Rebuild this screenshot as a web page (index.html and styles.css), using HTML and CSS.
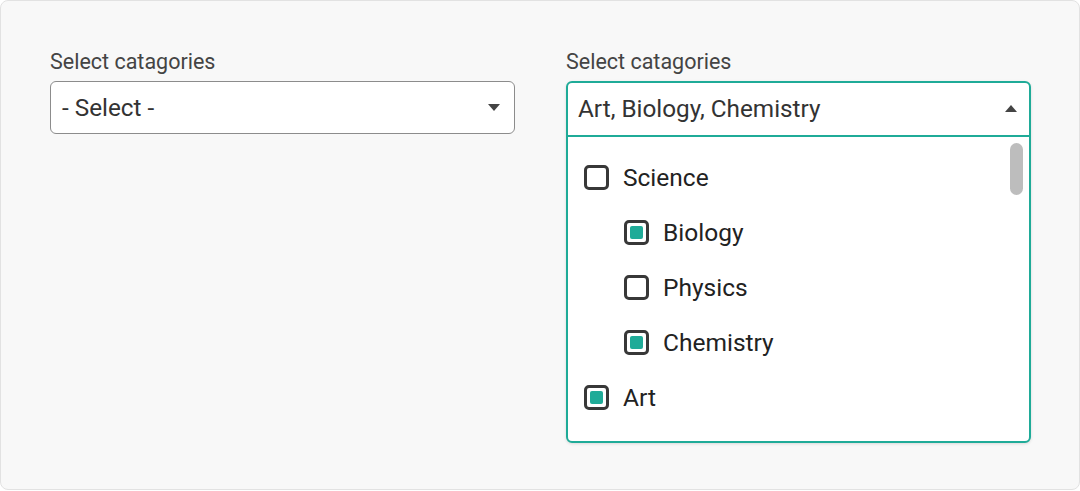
FILE: index.html
```html
<!DOCTYPE html>
<html>
<head>
<meta charset="utf-8">
<link rel="stylesheet" href="styles.css">
</head>
<body>
<div class="card">
  <div class="field">
    <div class="label">Select catagories</div>
    <div class="select">
      <span class="value">- Select -</span>
      <span class="caret down"></span>
    </div>
  </div>
  <div class="field">
    <div class="label">Select catagories</div>
    <div class="select-open">
      <div class="head">
        <span class="value">Art, Biology, Chemistry</span>
        <span class="caret up"></span>
      </div>
      <div class="list">
        <div class="scrollbar"></div>
        <div class="row"><span class="cb"></span><span class="txt">Science</span></div>
        <div class="row child"><span class="cb on"></span><span class="txt">Biology</span></div>
        <div class="row child"><span class="cb"></span><span class="txt">Physics</span></div>
        <div class="row child"><span class="cb on"></span><span class="txt">Chemistry</span></div>
        <div class="row"><span class="cb on"></span><span class="txt">Art</span></div>
      </div>
    </div>
  </div>
</div>
</body>
</html>
```
FILE: styles.css
```css
* { box-sizing: border-box; }
html, body { margin: 0; padding: 0; background: #ffffff; }
body { font-family: Roboto, "Noto Sans", Arial, sans-serif; width: 1080px; height: 491px; }
.card {
  width: 1080px;
  height: 490px;
  background: #f8f8f8;
  border: 1px solid #e2e2e2;
  border-radius: 8px;
  padding: 49px 49px 0 49px;
  display: flex;
  gap: 51px;
}
.field { display: flex; flex-direction: column; width: 465px; }
.label {
  font-size: 21.5px;
  line-height: 24px;
  color: #444;
  margin-bottom: 7px;
}
.select {
  height: 53px;
  width: 465px;
  background: #fff;
  border: 1px solid #8c8c8c;
  border-radius: 6px;
  display: flex;
  align-items: center;
  justify-content: space-between;
  padding: 0 14px 0 11px;
}
.value { font-size: 24.3px; color: #333; }
.caret { width: 0; height: 0; border-left: 6px solid transparent; border-right: 6px solid transparent; }
.caret.down { border-top: 7px solid #444; }
.caret.up { border-bottom: 7px solid #444; }
.select-open {
  width: 465px;
  border: 2px solid #1fab98;
  border-radius: 6px;
  background: #fff;
  box-shadow: 0 1px 3px rgba(0,0,0,0.12);
}
.head {
  height: 54px;
  border-bottom: 2px solid #1fab98;
  display: flex;
  align-items: center;
  justify-content: space-between;
  padding: 0 12px 2px 10px;
}
.list {
  position: relative;
  padding: 18px 0 22px 16px;
  display: flex;
  flex-direction: column;
  gap: 11px;
}
.scrollbar {
  position: absolute;
  top: 6px;
  right: 6px;
  width: 13px;
  height: 52px;
  border-radius: 7px;
  background: #bdbdbd;
}
.row { height: 44px; display: flex; align-items: center; gap: 14px; }
.row.child { padding-left: 40px; }
.cb {
  width: 25px;
  height: 25px;
  border: 3px solid #383838;
  border-radius: 5px;
  background: #fff;
  display: flex;
  align-items: center;
  justify-content: center;
  flex: none;
}
.cb.on::after {
  content: "";
  width: 13px;
  height: 13px;
  border-radius: 2px;
  background: #1fab98;
}
.txt { font-size: 24.5px; color: #222; }
```
